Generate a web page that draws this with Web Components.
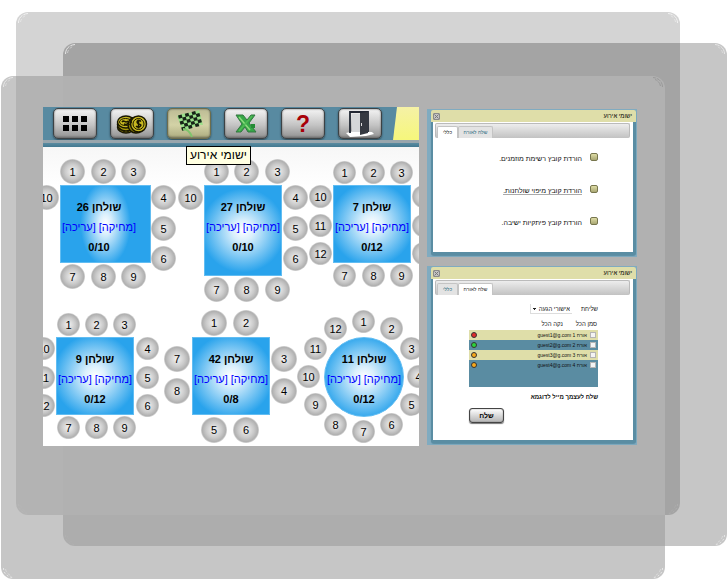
<!DOCTYPE html>
<html lang="he">
<head>
<meta charset="utf-8">
<title>ישומי אירוע</title>
<style>
body { margin: 0; background: #fff; font-family: "Liberation Sans", Arial, sans-serif; color: #000; }
</style>
</head>
<body>
<layered-backdrop>
  <seating-app></seating-app>
  <dialog-column>
    <app-dialog heading="ישומי אירוע" active="0"><download-list></download-list></app-dialog>
    <app-dialog heading="ישומי אירוע" active="1"><mail-form></mail-form></app-dialog>
  </dialog-column>
</layered-backdrop>
<script>
const define = (name, html) => customElements.define(name, class extends HTMLElement {
  connectedCallback() {
    if (this.shadowRoot) return;
    this.attachShadow({ mode: 'open' }).innerHTML = typeof html === 'function' ? html(this) : html;
  }
});

/* Three translucent rounded sheets behind the content */
const marks = color => ['tl', 'tr', 'br', 'bl'].map(c =>
  `<svg class="${c}" width="12" height="12" viewBox="0 0 12 12" fill="none" stroke="${color}"><path d="M1.500 11C1.500 6 5 2 11 1.500" stroke-dasharray="${c[0] === 't' ? '9 1' : '2 2'}"/><path d="M3.500 10C4 7 6 4.500 9 3.500" opacity=".6" stroke-dasharray="3 2"/></svg>`).join('');

define('layered-backdrop', `
<style>
:host { display: grid; grid-template-columns: 376fr 210fr; gap: 8px; align-items: start; position: relative; isolation: isolate; box-sizing: border-box; min-height: 100vh; padding: 107px 91px 138px 43px; }
.sheet, .core { position: absolute; z-index: -1; border-radius: 12px; }
.a { inset: 12px 48px 69px 16px; background: #d4d4d4; }
.b { inset: 43px 1px 38px 63px; background: rgba(0,0,0,.225); }
.c { inset: 76px 63px 5px 1px; background: rgba(153,153,153,.56); }
.core { inset: 76px 63px 69px 63px; background: #b1b1b1; border-radius: 0 12px 0 0; }
svg { position: absolute; }
.tl { left: 1px; top: 0; }
.tr { right: 1px; top: 0; transform: scaleX(-1); }
.br { right: 1px; bottom: 0; transform: scale(-1); }
.bl { left: 1px; bottom: 0; transform: scaleY(-1); }
.b .bl, .a .bl { opacity: .25; }
.a .br { opacity: .4; }
.core .tr { opacity: .6; }
</style>
<div class="sheet a">${marks('#f2f2f2')}</div>
<div class="sheet b">${marks('#e6e6e6')}</div>
<div class="sheet c">${marks('#e8e8e8')}</div>
<div class="core"><svg class="tr" width="12" height="12" viewBox="0 0 12 12" fill="none" stroke="#8a8a8a"><path d="M1.500 11C1.500 6 5 2 11 1.500M3.500 10C4 7 6 4.500 9 3.500" stroke-dasharray="5 1"/></svg></div>
<slot></slot>`);

define('dialog-column', `
<style>:host { display: grid; gap: 9px; padding-top: 2px; }</style><slot></slot>`);

define('tool-button', host => `
<style>
:host { display: block; flex: none; }
button { display: grid; place-items: center; width: 44px; height: 31px; padding: 0; border: 1px solid #3c4245; border-radius: 5px; background: linear-gradient(#f4f4f4, #c4c4c4 55%, #9c9c9c 90%, #777); box-shadow: inset 0 0 2px #555, 0 1px 2px #2b4754; color: #a80008; font: bold 23px/24px "Liberation Sans", Arial, sans-serif; }
:host([lit]) button { background: linear-gradient(#bdbc95, #d3d2a6 55%, #b5b488 90%, #85845f); border-color: #6d6d4c; }
</style>
<button type="button" aria-label="${host.getAttribute('label')}"><slot></slot></button>`);

/* Checkered cloth of the race flag */
const flag = (() => {
  let s = '';
  for (let r = 0; r < 5; r++) for (let c = 0; c < 6; c++) if ((r + c) % 2 === 0) {
    const x = 3 + c * 3.4 + r * .8, y = 5.5 + r * 3 - c * .9;
    s += `<path d="M${x} ${y}l3.600-.9.9 3.200-3.600.9z"/>`;
  }
  return s;
})();

define('seating-app', `
<style>
:host { display: block; min-width: 0; position: relative; background: #fdfdfd; }
nav { display: flex; gap: 13px; height: 33px; padding-left: 10px; overflow: hidden; background: #588aa1; box-sizing: border-box; }
nav tool-button { padding-top: 1px; }
.beam { flex: 1; margin-left: -2px; background: linear-gradient(#f5f1a6, #f6f77b); clip-path: polygon(4px 0, 100% 0, 100% 100%, 0 100%); }
.rule { height: 3px; background: #99a6ad; }
.edge { height: 4px; background: linear-gradient(#5b8ca1, #427991); }
.tip { position: absolute; left: 143px; top: 39px; z-index: 2; border: 1px solid #000; background: #ffffe1; padding: 0 3px; font-size: 12px; line-height: 17px; white-space: nowrap; }
svg { display: block; }
</style>
<nav>
<tool-button label="שולחנות"><svg width="24" height="15" viewBox="0 0 24 15"><path d="M0 0h6v6H0zM9 0h6v6H9zM18 0h6v6h-6zM0 9h6v6H0zM9 9h6v6H9zM18 9h6v6h-6z"/></svg></tool-button>
<tool-button label="תקציב"><svg width="32" height="22" viewBox="0 0 32 22"><g stroke="#181600" stroke-width="1.500"><ellipse cx="10" cy="14" rx="8.500" ry="6" fill="#8c7d08"/><ellipse cx="10" cy="11.500" rx="8.500" ry="6.500" fill="#a99b0b"/><ellipse cx="10" cy="9" rx="8.500" ry="6" fill="#c7b820"/><circle cx="20" cy="12" r="8" fill="#8c7d08"/><circle cx="22.500" cy="11" r="8" fill="#c7b820"/></g><g fill="none" stroke="#1b1800"><circle cx="22.500" cy="11" r="5.500"/><ellipse cx="9.500" cy="9" rx="6" ry="3.500"/><path d="M6 9c2-3 3 2 6-1M8 11c2 1 4 0 5-2M3 15l2 2M8 17v2M12 17v2" stroke-width="1.500"/><path d="M25 8.500c-2-2-5-.5-3.500 1.500s4.500 1 3 3-3.500 1-4.500 0M22.500 6.500v9" stroke-width="1.500"/></g></svg></tool-button>
<tool-button label="ישומי אירוע" lit><svg width="28" height="28" viewBox="0 0 28 28"><path d="M2 6Q8 3 13 3T24 0L28 15Q22 14 18 17T8 21z" fill="#9be08b"/><g fill="#172417">${flag}</g><path d="M8 19q6 0 9 8" fill="none" stroke="#7fc46c" stroke-width="2"/></svg></tool-button>
<tool-button label="Excel"><svg width="22" height="20" viewBox="0 0 22 20"><path d="M1 1h7l4 5 4-5h4l-6 8 7 9h-8l-3-5-4 5H1l6-8z" fill="#36a847" stroke="#337640"/><path d="M4 3l11 13" stroke="#8bdc7c" stroke-width="1.500"/><path d="M17 2L4 17" stroke="#4fba55" stroke-width="1.500"/><path d="M16 10h4v4h-4z" fill="#258b36"/></svg></tool-button>
<tool-button label="עזרה">?</tool-button>
<tool-button label="יציאה"><svg width="30" height="27" viewBox="0 0 30 27"><path d="M1 23l8-2 18 1 2 2-8 2-16 1z" fill="#fff"/><path d="M5 23V2h18v20" fill="none" stroke="#222833" stroke-width="1.800"/><path d="M7 4h9v18H7z" fill="#d5d7d9"/><path d="M15 3l8-1v21l-8 2z" fill="#353941"/><path d="M16.500 13v3" stroke="#ddd"/></svg></tool-button>
<div class="beam"></div>
</nav>
<div class="rule"></div><div class="edge"></div>
<floor-plan></floor-plan>
<div class="tip" role="tooltip" dir="rtl">ישומי אירוע</div>`);

/* Tables and seats sit on a free canvas: box is x, y, w, h; a seat is label, centre x, centre y */
const row = (labels, xs, y) => labels.map((l, i) => [l, xs[i], y]);
const col = (labels, x, ys) => labels.map((l, i) => [l, x, ys[i]]);
const PLAN = [
  { n: 26, c: '0/10', box: [17, 38, 91, 78], kind: 'narrow', d: 25, seats: [...row([1,2,3], [29,60,90], 24), ...col([4,5,6], 120, [50,81,111]), ...row([7,8,9], [29,60,90], 129), [10, 3, 50]] },
  { n: 27, c: '0/10', box: [161, 38, 78, 91], kind: '', d: 25, seats: [...row([1,2,3], [173,203,234], 24), ...col([4,5,6], 252, [50,81,111]), ...row([7,8,9], [173,203,234], 142), [10, 147, 50]] },
  { n: 7, c: '0/12', box: [290, 38, 78, 78], kind: '', d: 23, seats: [...row([1,2,3], [301,330,358], 25), ...col(['','',''], 380, [49,78,106]), ...row([7,8,9], [301,330,358], 128), ...col([10,11,12], 277, [49,78,106])] },
  { n: 9, c: '0/12', box: [13, 190, 78, 78], kind: '', d: 23, seats: [...row([1,2,3], [25,53,81], 177), ...col([4,5,6], 104, [201,230,258]), ...row([7,8,9], [25,53,81], 280), ...col([10,11,12], 0, [201,230,258])] },
  { n: 42, c: '0/8', box: [149, 190, 78, 78], kind: '', d: 26, seats: [...row([1,2], [171,203], 176), ...col([3,4], 241, [212,244]), ...row([5,6], [171,203], 283), ...col([7,8], 134, [212,244])] },
  { n: 11, c: '0/12', box: [281, 190, 80, 80], kind: 'round', d: 23, seats: [[1,320,174],[2,348,181],[3,368,201],[4,375,229],[5,368,257],[6,348,277],[7,320,284],[8,292,277],[9,272,257],[10,265,229],[11,272,201],[12,292,181]] }
];

define('floor-plan', `
<style>
:host { display: block; position: relative; overflow: hidden; height: 299px; background: linear-gradient(#f7f7f7, #fff 40px); }
seat-dot, plan-table { position: absolute; }
</style>` + PLAN.map(t =>
  `<plan-table kind="${t.kind}" number="${t.n}" count="${t.c}" style="left:${t.box[0]}px;top:${t.box[1]}px;width:${t.box[2]}px;height:${t.box[3]}px"></plan-table>` +
  t.seats.map(([l, x, y]) => `<seat-dot style="left:${x - (t.d >> 1)}px;top:${y - (t.d >> 1)}px;width:${t.d}px;height:${t.d}px">${l}</seat-dot>`).join('')
).join(''));

define('seat-dot', `
<style>
:host { display: grid; place-items: center; border-radius: 50%; font-size: 11px; line-height: 12px; background: radial-gradient(closest-side, #ececec 10%, #cacaca 60%, #b0b0b0 90%, #d6d6d6); }
</style><slot></slot>`);

define('plan-table', host => `
<style>
:host { display: flex; flex-direction: column; align-items: center; box-sizing: border-box; padding-top: 11px; border: 1px solid #62bdf2; font-size: 11px; line-height: 20px; white-space: nowrap; background: radial-gradient(circle 42px, #fff, #d9effc 25%, #29a3ec); }
:host([kind=narrow]) { padding-right: 13px; background: radial-gradient(25px 42px, #fff, #d9effc 25%, #29a3ec); }
:host([kind=round]) { border-radius: 50%; }
span { display: flex; gap: 3px; }
a { color: #00f; text-decoration: none; }
</style>
<b dir="rtl">שולחן ${host.getAttribute('number')}</b>
<span dir="rtl"><a href="#delete">[מחיקה]</a><a href="#edit">[עריכה]</a></span>
<b>${host.getAttribute('count')}</b>`);

define('app-dialog', host => `
<style>
:host { display: block; padding: 1px 1px 2px 4px; background: #80abc0; }
section { border: solid #5a8da3; border-width: 0 3px 3px 2px; border-radius: 3px; background: #fff; box-shadow: 0 1px 1px #5a8da3; }
header { display: flex; align-items: center; justify-content: space-between; height: 12px; margin: 0 -3px 0 -2px; padding: 0 4px 0 2px; border-radius: 2px 2px 0 0; background: #dfdea9; font-size: 6px; line-height: 12px; }
button { font: inherit; padding: 0; }
.close { display: grid; place-items: center; width: 7px; height: 7px; border: 1px solid #8a8a8a; border-radius: 1px; background: #c4c4c4; box-sizing: border-box; }
.tabs { display: flex; align-items: flex-end; height: 15px; margin: 1px 3px 0 2px; padding-left: 1px; border: 1px solid #bbb; border-width: 1px 1px 0; border-radius: 2px; background: linear-gradient(#ededed, #c2c2c2); box-sizing: border-box; }
.tabs button { height: 12px; border: 1px solid #c4c4c4; border-bottom: 0; border-radius: 2px 2px 0 0; background: #e3e3e3; color: #2d6d82; font-size: 5px; line-height: 11px; box-sizing: border-box; white-space: nowrap; }
.tabs button:nth-child(1) { width: 21px; }
.tabs button:nth-child(2) { width: 35px; }
.tabs button[aria-selected=true] { background: #fff; color: #222; }
</style>
<section>
<header><button class="close" type="button" aria-label="סגור"><svg width="5" height="5" viewBox="0 0 5 5" stroke="#777"><path d="M.5.5l4 4M4.500.5l-4 4"/></svg></button><span dir="rtl">${host.getAttribute('heading')}</span></header>
<div class="tabs" role="tablist">${['כללי', 'שלח לאורח'].map((t, i) => `<button role="tab" type="button" aria-selected="${host.getAttribute('active') == i}">${t}</button>`).join('')}</div>
<slot></slot>
</section>`);

define('download-list', `
<style>
:host { display: block; padding: 15px 35px 25px 0; direction: rtl; font-size: 7px; line-height: 10px; }
ul { display: grid; gap: 22px; margin: 0; padding: 0; list-style: none; }
li { display: flex; gap: 8px; height: 10px; }
button { width: 8px; height: 8px; padding: 0; border: 1px solid #77764d; border-radius: 2px; background: linear-gradient(#dedca5, #a9a774); }
a { color: #111; text-decoration: none; padding-top: 1px; white-space: nowrap; }
li:nth-child(2) a { border-bottom: 1px solid #aaa; }
</style>
<ul>${['הורדת קובץ רשימת מוזמנים.', 'הורדת קובץ מיפוי שולחנות.', 'הורדת קובץ פיתקיות ישיבה.'].map((t, i) => `<li><button type="button" aria-label="${t}"></button><a href="#file${i + 1}">${t}</a></li>`).join('')}</ul>`);

define('mail-form', `
<style>
:host { display: block; padding: 8px 35px 17px 36px; direction: rtl; font-size: 6px; line-height: 10px; color: #111; }
.kind { display: flex; gap: 9px; height: 12px; align-items: center; white-space: nowrap; }
select { width: 42px; height: 10px; padding: 0 2px 0 0; border: 1px solid #ddd; border-width: 0 0 1px 1px; border-radius: 0; appearance: none; background: linear-gradient(#222, #222) 2px 4px / 3px 1px no-repeat, linear-gradient(#222, #222) 3px 5px / 1px 1px no-repeat, #fff; font: inherit; color: inherit; }
.all { display: flex; gap: 13px; margin: 4px 1px 1px 0; }
.all button { padding: 0; border: 0; background: none; font: inherit; color: inherit; }
ul { margin: 0; padding: 0; height: 57px; list-style: none; background: #5a8ca2; font-size: 5px; }
li { display: flex; align-items: center; gap: 3px; height: 10px; padding: 0 2px; }
li:nth-child(odd) { background: #dfdea9; }
li label { flex: 1; white-space: nowrap; }
input { appearance: none; width: 6px; height: 6px; margin: 0; border: 1px solid #b5b5b5; background: #f4f4f4; box-sizing: border-box; }
i { width: 6px; height: 6px; border: 1px solid #333; border-radius: 50%; box-sizing: border-box; background: var(--state); }
.sample { margin: 5px 0 6px; font-weight: bold; }
.send { display: block; width: 35px; height: 15px; margin-right: auto; padding: 0; border: 1px solid #444; border-radius: 3px; background: linear-gradient(#fff, #b4b4b4); box-shadow: inset 0 0 1px #333, 0 1px 1px #777; font: bold 7px/12px "Liberation Sans", Arial, sans-serif; }
</style>
<div class="kind"><label for="kind">שליחת</label><select id="kind"><option>אישורי הגעה</option></select></div>
<div class="all"><button type="button">סמן הכל</button><button type="button">נקה הכל</button></div>
<ul>${['#e12c2c', '#2bd33a', '#f6a81c', '#f6a81c'].map((c, i) => `<li><input type="checkbox" id="g${i}"><label for="g${i}">אורח ${i + 1} guest${i + 1}@g.com</label><i style="--state:${c}"></i></li>`).join('')}</ul>
<div class="sample">שלח לעצמך מייל לדוגמא</div>
<button class="send" type="button">שלח</button>`);
</script>
</body>
</html>
